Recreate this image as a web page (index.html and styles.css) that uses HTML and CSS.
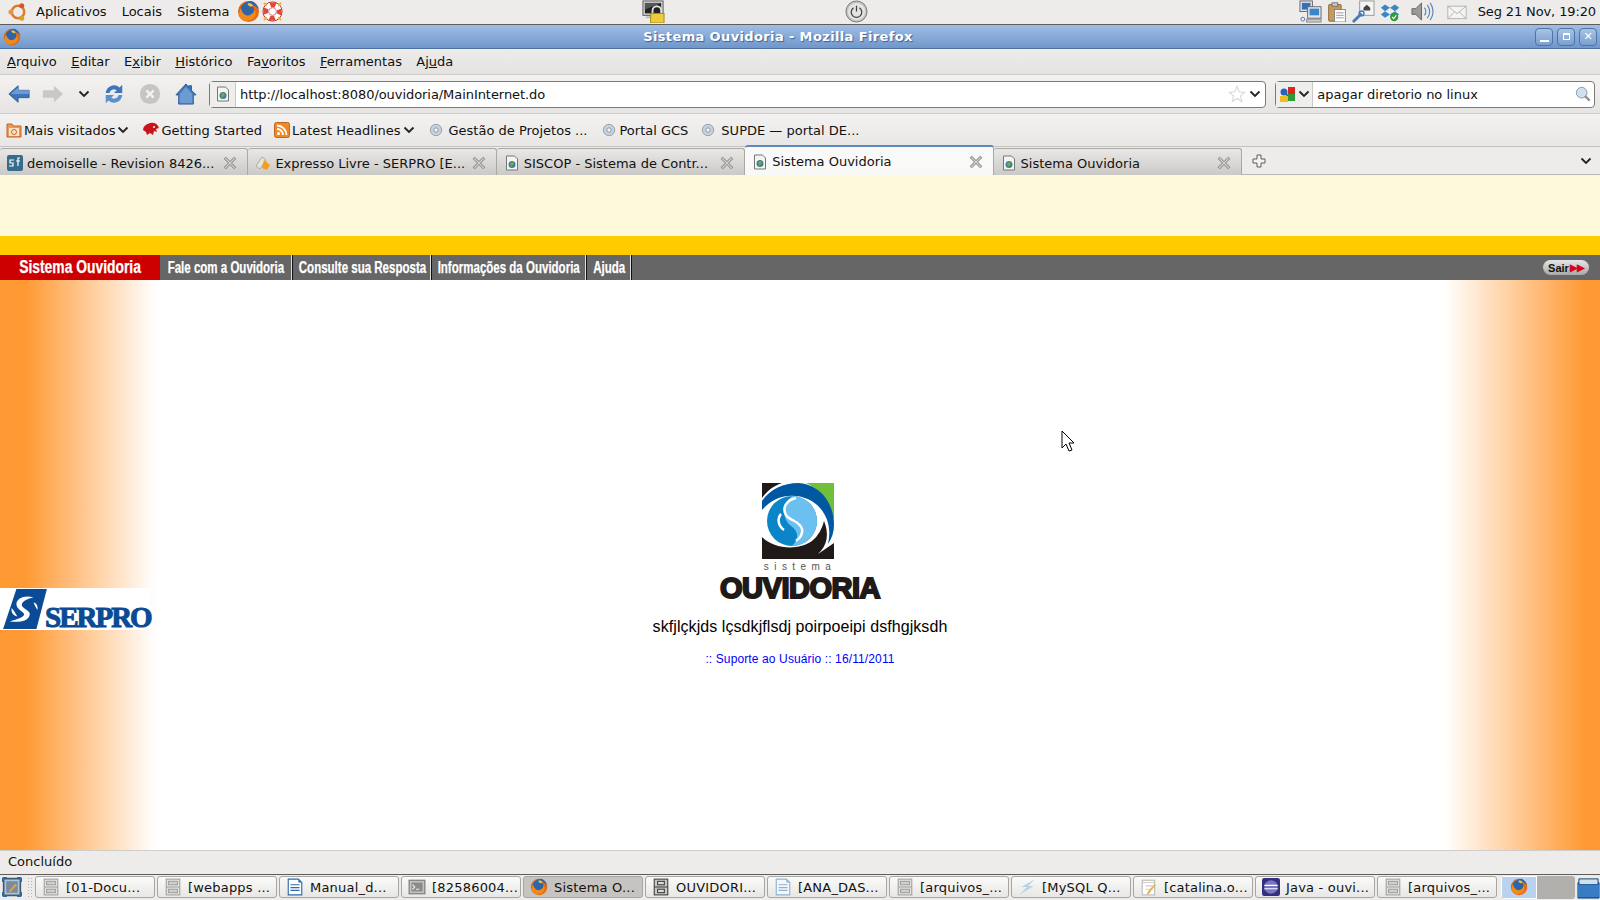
FILE: index.html
```html
<!DOCTYPE html>
<html lang="pt">
<head>
<meta charset="utf-8">
<title>Sistema Ouvidoria - Mozilla Firefox</title>
<link rel="stylesheet" href="styles.css">
</head>
<body>
<svg class="defs" width="0" height="0">
  <symbol id="fox" viewBox="0 0 24 24"><circle cx="12" cy="12" r="11" fill="#e66a12"/><path d="M2 13C3 6 9 1 15 1c4 1 7 5 8 9-2-3-5-5-8-4 2 1 3 3 3 5 0 4-4 7-8 6-3-1-5-3-5-6-1 1-2 2-3 2z" fill="#2f64a8"/><path d="M4 8c1 6 5 9 9 8 3-1 5-3 5-6 2 2 2 6 0 8-3 4-9 5-13 2-3-2-4-7-1-12z" fill="#f08a1d"/><path d="M12 3c2 0 4 1 5 3l-3 1-3-2z" fill="#f5c33b"/></symbol>
  <symbol id="ubuntu" viewBox="0 0 24 24"><circle cx="12" cy="12" r="7.500" fill="none" stroke="#dd7a2c" stroke-width="3"/><circle cx="3.500" cy="12" r="3" fill="#e8934a"/><circle cx="16.500" cy="4.500" r="3" fill="#d9541e"/><circle cx="16.500" cy="19.500" r="3" fill="#d9a21e"/></symbol>
  <symbol id="help" viewBox="0 0 24 24"><circle cx="12" cy="12" r="10" fill="#fff" stroke="#c92a1e" stroke-width="1"/><circle cx="12" cy="12" r="7" fill="none" stroke="#e0483a" stroke-width="5" stroke-dasharray="5.500 5.500" stroke-dashoffset="2.500"/><circle cx="12" cy="12" r="4" fill="#fff" stroke="#b33" stroke-width=".6"/><path d="M3 3l3 3M21 3l-3 3M3 21l3-3M21 21l-3-3" stroke="#d8b93a" stroke-width="2"/></symbol>
  <symbol id="lock" viewBox="0 0 24 24"><rect x="1" y="1" width="21" height="15" fill="#d8d8d8" stroke="#555"/><rect x="3" y="3" width="17" height="11" fill="#222"/><path d="M3 3h17L3 10z" fill="#555"/><rect x="4" y="17" width="8" height="2" fill="#bbb"/><path d="M11 14v-3a4.500 4.500 0 0 1 9 0v3" fill="none" stroke="#ddd" stroke-width="2"/><rect x="9" y="14" width="14" height="10" fill="#eccb3e" stroke="#a78a16"/></symbol>
  <symbol id="power" viewBox="0 0 24 24"><circle cx="12" cy="12" r="11" fill="#c4c4c4" stroke="#777"/><circle cx="12" cy="12" r="9" fill="#e4e4e2"/><path d="M9 8a5.500 5.500 0 1 0 6 0M12 6v6" fill="none" stroke="#444" stroke-width="1.300"/></symbol>
  <symbol id="net" viewBox="0 0 24 24"><rect x="1" y="1" width="13" height="11" fill="#dfe6ee" stroke="#667"/><rect x="3" y="3" width="9" height="7" fill="#3572b0"/><rect x="9" y="7" width="14" height="12" fill="#dfe6ee" stroke="#667"/><rect x="11" y="9" width="10" height="7" fill="#3b86c8"/><rect x="8" y="20" width="15" height="3" fill="#ccc" stroke="#888"/><circle cx="4" cy="20" r="2" fill="none" stroke="#57a"/></symbol>
  <symbol id="clip" viewBox="0 0 24 24"><rect x="2" y="3" width="15" height="20" rx="1" fill="#c79a5a" stroke="#7b5a2a"/><rect x="6" y="1" width="7" height="4" fill="#ccc" stroke="#666"/><rect x="9" y="9" width="13" height="15" fill="#fff" stroke="#777"/><path d="M11 13h9M11 16h9M11 19h9" stroke="#888"/></symbol>
  <symbol id="remote" viewBox="0 0 24 24"><rect x="8" y="1" width="15" height="15" fill="#f4f4f4" stroke="#999"/><path d="M12 8l3.500-3 3.500 3v3h-7z" fill="#444"/><path d="M1 23l9-9" stroke="#4a7ab5" stroke-width="3"/><circle cx="10" cy="14" r="2.500" fill="none" stroke="#4a7ab5" stroke-width="1.500"/></symbol>
  <symbol id="dropbox" viewBox="0 0 24 24"><path d="M6 3l6 4-6 4-5-4zM18 3l-6 4 6 4 5-4zM6 11l6 4-6 4-5-4zM18 11l-6 4 6 4 5-4z" fill="#3b87c4"/><circle cx="17" cy="18" r="5" fill="#2f9a3c"/><path d="M14.500 18l2 2 3-4" fill="none" stroke="#fff" stroke-width="1.500"/></symbol>
  <symbol id="speaker" viewBox="0 0 24 24"><path d="M1 9h4l6-6v18l-6-6H1z" fill="#9a9a98" stroke="#666"/><path d="M14 8q3 4 0 8M17 5q5 7 0 14M20 3q6 9 0 18" fill="none" stroke="#5b86b8" stroke-width="1.200"/></symbol>
  <symbol id="mail" viewBox="0 0 24 24"><rect x="1" y="5" width="22" height="15" fill="#f4f4f2" stroke="#aaa"/><path d="M1 5l11 9 11-9M1 20l8-8M23 20l-8-8" fill="none" stroke="#aaa"/></symbol>
  <symbol id="back" viewBox="0 0 24 24"><path d="M1 12L11 3v5h12v8H11v5z" fill="#3f76b8" stroke="#2c5a96"/><path d="M3 12l8-7v3h12v4z" fill="#6b9bd2"/></symbol>
  <symbol id="forward" viewBox="0 0 24 24"><path d="M23 12L13 3v5H1v8h12v5z" fill="#c8c8c6"/></symbol>
  <symbol id="reload" viewBox="0 0 24 24"><path d="M3 11a9 9 0 0 1 15-6l3-3v9h-9l3-3a5 5 0 0 0-8 3z" fill="#3f76b8"/><path d="M21 13a9 9 0 0 1-15 6l-3 3v-9h9l-3 3a5 5 0 0 0 8-3z" fill="#5c8fca"/></symbol>
  <symbol id="stop" viewBox="0 0 24 24"><circle cx="12" cy="12" r="11" fill="#c7c5c2"/><path d="M8 8l8 8M16 8l-8 8" stroke="#f2f2f0" stroke-width="2.500"/></symbol>
  <symbol id="home" viewBox="0 0 24 24"><path d="M12 1L1 13h3v10h16V13h3l-5-5V3h-3v2z" fill="#3f76b8" stroke="#2c5a96"/><path d="M12 4L5 12v10h14V12z" fill="#6b9bd2"/></symbol>
  <symbol id="page" viewBox="0 0 16 16"><path d="M2.500 1h8l3 3v11h-11z" fill="#f4f4f2" stroke="#777"/><circle cx="8" cy="9.500" r="3.500" fill="#3f7f9a"/><path d="M6 8l3-1 1 2-3 3z" fill="#7aa846"/></symbol>
  <symbol id="dot" viewBox="0 0 16 16"><circle cx="8" cy="8" r="6.500" fill="#c9d2da" stroke="#8c9aa8"/><circle cx="8" cy="8" r="2.500" fill="#f4f4f4" stroke="#7e8f9f"/></symbol>
  <symbol id="close" viewBox="0 0 16 16"><path d="M2 2l12 12M14 2L2 14" stroke="#8c8c8a" stroke-width="3.500"/><path d="M2.500 2.500l11 11M13.500 2.500l-11 11" stroke="#d8d8d6" stroke-width="1.300"/></symbol>
  <symbol id="star" viewBox="0 0 24 24"><path d="M12 2l3 7 7 .8-5.300 4.700L18.300 22 12 18l-6.300 4 1.600-7.500L2 9.800 9 9z" fill="#fff" stroke="#d8d8d8" stroke-width="1.500"/></symbol>
  <symbol id="google" viewBox="0 0 16 16"><path d="M8 1h7v8H8z" fill="#d8281c"/><path d="M6 8h9v7H6z" fill="#2f9a3c"/><path d="M0 10h8v6H0z" fill="#f0bc24"/><circle cx="4" cy="6" r="3.500" fill="#2a62c4"/></symbol>
  <symbol id="search" viewBox="0 0 24 24"><circle cx="10" cy="10" r="8" fill="#cfe0ee" stroke="#8c9aa8" stroke-width="1.500"/><path d="M15 15l7 7" stroke="#8b8f94" stroke-width="3.500"/></symbol>
  <symbol id="folder" viewBox="0 0 16 16"><path d="M1 2h5l1 2h8v11H1z" fill="#e89a56" stroke="#c0632a"/><rect x="3" y="6" width="10" height="8" fill="#fbe3c6"/><circle cx="8" cy="10" r="2.500" fill="none" stroke="#d0632a"/></symbol>
  <symbol id="bug" viewBox="0 0 16 16"><path d="M0 8q0-5 7-7 7-1 9 5l-3 1 1 3-3-1-1 4-3-2-3 2-1-3z" fill="#c8141c"/><circle cx="11" cy="5" r="1" fill="#fff"/></symbol>
  <symbol id="rss" viewBox="0 0 16 16"><rect x=".5" y=".5" width="15" height="15" rx="2" fill="#ee8a24" stroke="#c0632a"/><circle cx="4.500" cy="11.500" r="1.500" fill="#fff"/><path d="M3 7a6 6 0 0 1 6 6M3 3.500A9.500 9.500 0 0 1 12.500 13" fill="none" stroke="#fff" stroke-width="1.800"/></symbol>
  <symbol id="sf" viewBox="0 0 16 16"><rect x="0" y="0" width="16" height="16" rx="2" fill="#356c8c"/><path d="M7 5H3v3h3v3H2M13 3h-2v8M9 6h4" fill="none" stroke="#fff" stroke-width="1.200"/></symbol>
  <symbol id="expresso" viewBox="0 0 16 16"><path d="M1 11L7 2l4 3-6 9z" fill="#e8e4da" stroke="#aaa"/><path d="M9 5l6 5-3 5-5-2z" fill="#f0a020"/></symbol>
  <symbol id="drawer" viewBox="0 0 16 16"><rect x="2" y="1" width="12" height="14" fill="#e6e6e4" stroke="#a2a2a0"/><path d="M2 8h12" stroke="#a2a2a0"/><rect x="4" y="3" width="8" height="3" fill="#d0d0ce" stroke="#a2a2a0"/><rect x="4" y="10" width="8" height="3" fill="#d0d0ce" stroke="#a2a2a0"/></symbol>
  <symbol id="drawerdark" viewBox="0 0 16 16"><rect x="2" y="1" width="12" height="14" fill="#c8c8c6" stroke="#444"/><path d="M2 8h12" stroke="#444"/><rect x="5" y="3" width="6" height="3" fill="#ddd" stroke="#444"/><rect x="5" y="10" width="6" height="3" fill="#ddd" stroke="#444"/></symbol>
  <symbol id="doc" viewBox="0 0 16 16"><path d="M2 1h9l3 3v11H2z" fill="#fff" stroke="#2c6aa8"/><path d="M4 6h8M4 8.500h8M4 11h8" stroke="#2c6aa8"/><path d="M11 1l3 3h-3z" fill="#2c6aa8"/></symbol>
  <symbol id="docpale" viewBox="0 0 16 16"><path d="M2 1h9l3 3v11H2z" fill="#f4f8fc" stroke="#8fb2d2"/><path d="M4 6h8M4 8.500h8M4 11h8" stroke="#8fb2d2"/><path d="M11 1l3 3h-3z" fill="#8fb2d2"/></symbol>
  <symbol id="term" viewBox="0 0 16 16"><rect x="1" y="2" width="14" height="12" fill="#c4c4c2" stroke="#777"/><rect x="3" y="4" width="10" height="8" fill="#8c8c8a"/><path d="M4 6l2 2-2 2M7 10h3" fill="none" stroke="#eee"/></symbol>
  <symbol id="bolt" viewBox="0 0 16 16"><path d="M15 1L3 8h5l-7 7 13-8H9z" fill="#b8d0e4"/></symbol>
  <symbol id="note" viewBox="0 0 16 16"><rect x="2" y="2" width="11" height="13" fill="#fff" stroke="#bbb"/><path d="M2 4h11M5 7h6M5 10h4" stroke="#ccc"/><path d="M14 6l-6 8-2 1 1-3 6-7z" fill="#e8b04a"/></symbol>
  <symbol id="eclipse" viewBox="0 0 16 16"><rect x="0" y="0" width="16" height="16" rx="2" fill="#34307c"/><circle cx="8" cy="8" r="6" fill="#7c74c4"/><path d="M2 6.500h12M2 9.500h12" stroke="#fff"/></symbol>
  <symbol id="desk" viewBox="0 0 24 24"><rect x="2" y="2" width="20" height="20" rx="1" fill="#a9c8de" stroke="#45586c" stroke-width="2"/><rect x="5" y="5" width="14" height="14" fill="#7a8c9c"/><path d="M8 17l8-9 2 2-8 8z" fill="#e8a040"/><path d="M1 1h5M1 1v5M23 1h-5M23 1v5M1 23h5M1 23v-5M23 23h-5M23 23v-5" stroke="#2c6aa8" stroke-width="2"/></symbol>
  <symbol id="trash" viewBox="0 0 24 24"><path d="M1 7h22v16H1z" fill="#2a6ab0" stroke="#14406e"/><path d="M2 3h20v6H2z" fill="#cfe0ee" stroke="#14406e"/><path d="M1 9h22v13H1z" fill="#3a7cc4"/></symbol>
  <symbol id="cursor" viewBox="0 0 14 22"><path d="M1 1v17l4-4 3 7 3-1-3-7h5z" fill="#fff" stroke="#000"/></symbol>
  <symbol id="chev" viewBox="0 0 12 8"><path d="M1.500 1.500L6 6l4.500-4.500" fill="none" stroke="#222" stroke-width="1.800"/></symbol>
  <symbol id="plus" viewBox="0 0 14 14"><path d="M5 1h4v4h4v4H9v4H5V9H1V5h4z" fill="#f2f2f0" stroke="#5c5c5a"/></symbol>
</svg>

<div class="screen">
  <header class="panel">
    <svg class="i20 ubuntu-i"><use href="#ubuntu"/></svg>
    <span class="panel-menu">Aplicativos</span>
    <span class="panel-menu">Locais</span>
    <span class="panel-menu">Sistema</span>
    <svg class="i23"><use href="#fox"/></svg>
    <svg class="i23 help-i"><use href="#help"/></svg>
    <svg class="i23 lock-i"><use href="#lock"/></svg>
    <svg class="i23 power-i"><use href="#power"/></svg>
    <div class="tray">
      <svg class="i23"><use href="#net"/></svg>
      <svg class="i20"><use href="#clip"/></svg>
      <svg class="i23"><use href="#remote"/></svg>
      <svg class="i20"><use href="#dropbox"/></svg>
      <svg class="i23"><use href="#speaker"/></svg>
      <svg class="i20"><use href="#mail"/></svg>
      <span class="clock">Seg 21 Nov, 19:20</span>
    </div>
  </header>

  <div class="titlebar">
    <svg class="i18 title-fox"><use href="#fox"/></svg>
    <span class="title-text">Sistema Ouvidoria - Mozilla Firefox</span>
    <div class="winbtns">
      <span class="winbtn"><span class="w-min"></span></span>
      <span class="winbtn"><span class="w-max"></span></span>
      <span class="winbtn"><span class="w-x">✕</span></span>
    </div>
  </div>

  <nav class="menubar">
    <span><u>A</u>rquivo</span><span><u>E</u>ditar</span><span>E<u>x</u>ibir</span><span><u>H</u>istórico</span><span>Fa<u>v</u>oritos</span><span><u>F</u>erramentas</span><span>Aj<u>u</u>da</span>
  </nav>

  <div class="navbar">
    <svg class="i22 nav-back"><use href="#back"/></svg>
    <svg class="i22 nav-fwd"><use href="#forward"/></svg>
    <svg class="chev nav-chev"><use href="#chev"/></svg>
    <svg class="i22 nav-reload"><use href="#reload"/></svg>
    <svg class="i22 nav-stop"><use href="#stop"/></svg>
    <svg class="i22 nav-home"><use href="#home"/></svg>
    <div class="urlbar">
      <span class="url-fav"><svg class="i16"><use href="#page"/></svg></span>
      <span class="url-text">http://localhost:8080/ouvidoria/MainInternet.do</span>
      <svg class="i18 star-i"><use href="#star"/></svg>
      <svg class="chev"><use href="#chev"/></svg>
    </div>
    <div class="searchbar">
      <span class="search-eng"><svg class="i16"><use href="#google"/></svg><svg class="chev"><use href="#chev"/></svg></span>
      <span class="search-text">apagar diretorio no linux</span>
      <svg class="i16"><use href="#search"/></svg>
    </div>
  </div>

  <div class="bookmarks">
    <span class="bm bm-a"><svg class="i16"><use href="#folder"/></svg>Mais visitados<svg class="chev"><use href="#chev"/></svg></span>
    <span class="bm bm-b"><svg class="i16"><use href="#bug"/></svg>Getting Started</span>
    <span class="bm bm-c"><svg class="i16"><use href="#rss"/></svg>Latest Headlines<svg class="chev"><use href="#chev"/></svg></span>
    <span class="bm bm-d"><svg class="i14"><use href="#dot"/></svg>Gestão de Projetos ...</span>
    <span class="bm bm-e"><svg class="i14"><use href="#dot"/></svg>Portal GCS</span>
    <span class="bm bm-d"><svg class="i14"><use href="#dot"/></svg>SUPDE — portal DE...</span>
  </div>

  <div class="tabbar">
    <div class="tab"><svg class="i16"><use href="#sf"/></svg><span class="tab-t">demoiselle - Revision 8426...</span><svg class="i14"><use href="#close"/></svg></div>
    <div class="tab"><svg class="i16"><use href="#expresso"/></svg><span class="tab-t">Expresso Livre - SERPRO [E...</span><svg class="i14"><use href="#close"/></svg></div>
    <div class="tab"><svg class="i16"><use href="#page"/></svg><span class="tab-t">SISCOP - Sistema de Contr...</span><svg class="i14"><use href="#close"/></svg></div>
    <div class="tab tab-on"><svg class="i16"><use href="#page"/></svg><span class="tab-t">Sistema Ouvidoria</span><svg class="i14"><use href="#close"/></svg></div>
    <div class="tab"><svg class="i16"><use href="#page"/></svg><span class="tab-t">Sistema Ouvidoria</span><svg class="i14"><use href="#close"/></svg></div>
    <svg class="i14 tab-plus"><use href="#plus"/></svg>
    <svg class="chev tab-chev"><use href="#chev"/></svg>
  </div>

  <main class="page">
    <div class="cream"></div>
    <div class="yellow"></div>
    <div class="sysnav">
      <span class="sys-name"><span class="squeeze">Sistema Ouvidoria</span></span>
      <span class="sys-item w1"><span class="squeeze">Fale com a Ouvidoria</span></span>
      <span class="sys-item w2"><span class="squeeze">Consulte sua Resposta</span></span>
      <span class="sys-item w3"><span class="squeeze">Informações da Ouvidoria</span></span>
      <span class="sys-item w4"><span class="squeeze">Ajuda</span></span>
      <span class="sair">Sair<span class="sair-arrows">▶▶</span></span>
    </div>
    <div class="content">
      <div class="serpro">
        <svg class="serpro-mark" viewBox="0 0 46 42"><path d="M14 0h32L35 42H0z" fill="#0b4a94"/><path d="M7 34c8 1 19 1 21-7 1-4-6-6-8-9-2-4 5-8 12-9-8-3-18 0-18 7 0 5 6 7 8 10 1 3-7 6-15 8z" fill="#fff"/><path d="M9 20c-1 5 2 8 6 9-2-3-3-6-6-9zM36 22c1-4-1-7-4-8 1 3 2 5 4 8z" fill="#fff"/></svg>
        <span class="serpro-text">SERPRO</span>
      </div>
      <div class="center">
        <svg class="logo-mark" viewBox="0 0 72 76">
          <rect width="72" height="76" fill="#fff"/>
          <path d="M0 0h20C11 3 5 8 0 15z" fill="#1f1a17"/>
          <path d="M44 0h28v40C70 22 60 7 44 0z" fill="#6fbf3a"/>
          <path d="M0 54c12 12 36 14 50 4 6-5 10-12 12-20 5 12 4 24-6 33l16-11v16H0z" fill="#1f1a17"/>
          <path d="M0 18C8 6 22 0 36 0c22 1 36 20 36 42 0 7-2 13-6 19 3-13 1-26-8-36C46 11 18 6 0 27z" fill="#0058a3"/>
          <circle cx="30" cy="38" r="25" fill="#0a86c8"/>
          <path d="M30 13a25 25 0 0 1 0 50c7-7 7-14-1-20-9-7-9-20 1-30z" fill="#6cc0f0"/>
          <path d="M34 15c-10 2-14 10-10 17 4 6 14 6 16 14 1 5-2 9-6 12M22 47c-6-4-7-12-3-16" fill="none" stroke="#fff" stroke-width="2.500"/>
        </svg>
        <span class="logo-sub">sistema</span>
        <span class="logo-name">OUVIDORIA</span>
        <p class="msg">skfjlçkjds lçsdkjflsdj poirpoeipi dsfhgjksdh</p>
        <p class="support">:: Suporte ao Usuário :: 16/11/2011</p>
      </div>
      <svg class="mouse"><use href="#cursor"/></svg>
    </div>
  </main>

  <div class="status">Concluído</div>

  <footer class="taskbar">
    <svg class="i20 desk-i"><use href="#desk"/></svg>
    <span class="handle"></span>
    <span class="task"><svg class="i18"><use href="#drawer"/></svg><span>[01-Docu...</span></span>
    <span class="task"><svg class="i18"><use href="#drawer"/></svg><span>[webapps ...</span></span>
    <span class="task"><svg class="i18"><use href="#doc"/></svg><span>Manual_d...</span></span>
    <span class="task"><svg class="i18"><use href="#term"/></svg><span>[82586004...</span></span>
    <span class="task task-on"><svg class="i18"><use href="#fox"/></svg><span>Sistema O...</span></span>
    <span class="task"><svg class="i18"><use href="#drawerdark"/></svg><span>OUVIDORI...</span></span>
    <span class="task"><svg class="i18"><use href="#docpale"/></svg><span>[ANA_DAS...</span></span>
    <span class="task"><svg class="i18"><use href="#drawer"/></svg><span>[arquivos_...</span></span>
    <span class="task"><svg class="i18"><use href="#bolt"/></svg><span>[MySQL Q...</span></span>
    <span class="task"><svg class="i18"><use href="#note"/></svg><span>[catalina.o...</span></span>
    <span class="task"><svg class="i18"><use href="#eclipse"/></svg><span>Java - ouvi...</span></span>
    <span class="task"><svg class="i18"><use href="#drawer"/></svg><span>[arquivos_...</span></span>
    <div class="pager"><span class="pager-on"><svg class="i18"><use href="#fox"/></svg></span><span class="pager-off"></span></div>
    <svg class="i23 trash-i"><use href="#trash"/></svg>
  </footer>
</div>
</body>
</html>
```

FILE: styles.css
```css
* { box-sizing: border-box; }
html, body { margin: 0; padding: 0; }
body { width: 1600px; height: 900px; overflow: hidden; font-family: "DejaVu Sans", sans-serif; font-size: 13px; color: #111; background: #edecea; }
.defs { position: absolute; }
svg { display: block; flex: none; }
.i14 { width: 14px; height: 14px; }
.i16 { width: 16px; height: 16px; }
.i18 { width: 18px; height: 18px; }
.i20 { width: 20px; height: 20px; }
.i22 { width: 22px; height: 22px; }
.i23 { width: 23px; height: 23px; }
.chev { width: 12px; height: 8px; }

.screen { display: flex; flex-direction: column; width: 1600px; height: 900px; }

.panel { display: flex; align-items: center; height: 25px; padding-bottom: 1px; background: #edecea; border-bottom: 1px solid #5d5e5c; flex: none; }
.ubuntu-i { margin-left: 8px; margin-right: 8px; }
.panel-menu { margin-right: 15px; }
.panel-menu + svg { margin-left: -7px; }
.help-i { margin-left: 1px; }
.lock-i { margin-left: 358px; }
.power-i { margin-left: 180px; }
.tray { display: flex; align-items: center; gap: 5px; margin-left: auto; }
.tray svg:nth-child(5) { margin-left: 6px; }
.tray svg:nth-child(6) { margin-left: 8px; }
.clock { margin-left: 6px; margin-right: 4px; letter-spacing: -.12px; }

.titlebar { display: flex; align-items: center; height: 24px; flex: none; background: linear-gradient(#a0bde4, #7097cb); border-bottom: 1px solid #4e74a6; }
.title-fox { margin-left: 3px; }
.title-text { flex: 1; text-align: center; color: #fff; font-weight: bold; font-size: 13px; letter-spacing: .37px; text-shadow: 1px 1px 1px #3c5f92; }
.winbtns { display: flex; gap: 4px; margin-right: 3px; }
.winbtn { display: flex; align-items: center; justify-content: center; width: 18px; height: 18px; border: 1px solid #4e74a6; border-radius: 4px; background: linear-gradient(#a8c3e6, #7a9fd0); }
.w-min { width: 9px; height: 2px; margin-top: 8px; background: #fff; }
.w-max { width: 7px; height: 7px; border: 1px solid #fff; border-top-width: 2px; }
.w-x { color: #fff; font-size: 11px; line-height: 1; font-weight: bold; }

.menubar { display: flex; align-items: center; gap: 14.4px; height: 26px; padding: 0 0 1px 7px; flex: none; background: linear-gradient(#edecea, #e4e3e1); border-bottom: 1px solid #cfcdca; }

.navbar { display: flex; align-items: center; height: 39px; padding-right: 5px; flex: none; background: linear-gradient(#f3f2f0, #e6e5e3); border-bottom: 1px solid #cfcdca; }
.nav-back { margin-left: 8px; margin-right: 12px; }
.nav-fwd { margin-right: 12px; }
.nav-chev { margin-left: 2px; margin-right: 13px; }
.nav-reload { margin-right: 14px; }
.nav-stop { margin-right: 14px; }
.nav-home { margin-right: 11px; }
.urlbar { display: flex; align-items: center; width: 1058px; height: 27px; margin-left: 1px; background: #fff; border: 1px solid #7a7a78; border-radius: 4px; }
.url-fav { display: flex; align-items: center; justify-content: center; width: 26px; height: 25px; background: #eeeeec; border-right: 1px solid #c8c8c6; }
.url-text { flex: 1; padding-left: 4px; letter-spacing: -.06px; }
.star-i { margin-right: 3px; }
.urlbar .chev { margin-right: 4px; }
.searchbar { display: flex; align-items: center; width: 320px; height: 27px; margin-left: 9px; padding-right: 3px; background: #fff; border: 1px solid #7a7a78; border-radius: 4px; }
.search-eng { display: flex; align-items: center; gap: 2px; height: 25px; padding: 0 2px 0 4px; background: #eeeeec; border-right: 1px solid #c8c8c6; }
.search-text { flex: 1; padding-left: 4px; }

.bookmarks { display: flex; align-items: center; height: 33px; padding-left: 6px; flex: none; background: linear-gradient(#f3f2f0, #e8e7e5); border-bottom: 1px solid #c4c2bf; }
.bm { display: flex; align-items: center; gap: 2px; margin-right: 12px; }
.bm-a { margin-right: 14px; }
.bm-c { margin-right: 11px; }
.bm-d { gap: 6px; margin-left: 3px; }
.bm-e { gap: 3px; margin-left: 3px; margin-right: 10px; }

.tabbar { display: flex; align-items: center; height: 28px; flex: none; background: #edecea; border-bottom: 1px solid #b9b7b4; }
.tab { display: flex; align-items: center; width: 248.4px; height: 27px; margin-top: 1px; padding: 3px 10px 0 7px; background: linear-gradient(#e9e8e6, #cbc9c6); border: 1px solid #aaa8a5; border-bottom: 0; border-left-width: 0; border-radius: 3px 3px 0 0; }
.tab-t { flex: 1; padding-left: 4px; white-space: nowrap; }
.tab-on { height: 30px; margin-top: -2px; padding-top: 2px; background: #f9f9f7; border-top: 2px solid #5d88bd; }
.tab-plus { margin-left: 10px; }
.tab-chev { margin-left: auto; margin-right: 8px; }

.page { display: flex; flex-direction: column; flex: 1; min-height: 0; background: #fff; }
.cream { height: 61px; flex: none; background: #fff9dc; }
.yellow { height: 19px; flex: none; background: #ffcc00; }
.sysnav { display: flex; align-items: stretch; height: 25px; flex: none; background: #666; color: #fff; font-family: "Liberation Sans", sans-serif; font-weight: bold; font-size: 16px; }
.squeeze { display: inline-block; flex: none; white-space: nowrap; transform: scaleX(.72); -webkit-text-stroke: .25px #fff; }
.sys-name { display: flex; align-items: center; justify-content: center; width: 160px; background: #cc0000; font-size: 18px; }
.sys-name .squeeze { transform: scaleX(.77); }
.sys-item { display: flex; align-items: center; justify-content: center; border-right: 1px solid #111; box-shadow: inset -1px 0 0 #ddd; }
.w1 { width: 133px; }
.w2 { width: 139px; }
.w3 { width: 155px; }
.w4 { width: 45px; }
.sair { display: flex; align-items: center; justify-content: center; margin: 5px 11px 5px auto; width: 46px; border-radius: 8px; background: linear-gradient(#e6e6e6, #a8a8a8); color: #111; font-size: 11px; }
.sair-arrows { color: #d8001c; font-size: 10px; letter-spacing: -1px; margin-left: 1px; }

.content { position: relative; flex: 1; display: flex; flex-direction: column; align-items: center; background: linear-gradient(90deg, #ff9933 0, #ff9933 25px, #ffffff 155px, #ffffff 1445px, #ff9933 1585px, #ff9933 100%); }
.serpro { position: absolute; left: 0; top: 308px; display: flex; align-items: center; width: 150px; height: 42px; padding-left: 2px; background: #fff; }
.serpro-mark { width: 46px; height: 40px; }
.serpro-text { margin-left: -3px; margin-top: 15px; color: #0b4a94; font-family: "Liberation Serif", serif; font-weight: bold; font-size: 29px; line-height: 26px; letter-spacing: -2px; -webkit-text-stroke: 1px #0b4a94; }
.center { display: flex; flex-direction: column; align-items: center; margin-top: 203px; }
.logo-mark { width: 72px; height: 76px; margin-right: 3px; }
.logo-sub { margin-top: 2px; color: #555; font-family: "Liberation Sans", sans-serif; font-size: 10px; line-height: 12px; letter-spacing: 5.4px; }
.logo-name { color: #1f1a17; font-family: "Liberation Sans", sans-serif; font-weight: bold; font-size: 29px; line-height: 30px; letter-spacing: -.5px; -webkit-text-stroke: 2px #1f1a17; }
.msg { margin: 14px 0 0; font-family: "Liberation Sans", sans-serif; font-size: 16px; line-height: 20px; letter-spacing: .07px; color: #000; }
.support { margin: 15px 0 0; font-family: "Liberation Sans", sans-serif; font-size: 12px; line-height: 14px; letter-spacing: .12px; color: #0000ff; }
.mouse { position: absolute; left: 1061px; top: 150px; width: 14px; height: 22px; }

.status { display: flex; align-items: center; height: 25px; padding: 0 0 3px 8px; flex: none; background: #edecea; border-top: 1px solid #cfcdca; border-bottom: 1px solid #5d5e5c; }

.taskbar { display: flex; align-items: center; height: 25px; padding-bottom: 1px; flex: none; background: #edecea; }
.desk-i { margin-left: 2px; }
.handle { width: 6px; height: 20px; margin: 0 2px 0 5px; background-image: radial-gradient(#b5b5b3 1px, transparent 1px); background-size: 3px 3px; }
.task { display: flex; align-items: center; flex: none; width: 120px; height: 22px; margin-right: 2px; padding: 0 4px 0 6px; background: linear-gradient(#fafaf9, #e8e7e5); border: 1px solid #a8a6a3; border-radius: 3px; }
.task span { flex: 1; padding-left: 6px; white-space: nowrap; letter-spacing: .2px; }
.task-on { background: #c6c4c1; }
.pager { display: flex; height: 23px; width: 74px; margin-left: 2px; border-radius: 3px; overflow: hidden; background: #b2b0ad; }
.pager-on { display: flex; align-items: center; justify-content: center; width: 36px; background: #b8d2f0; border: 1px solid #fff; }
.trash-i { margin-left: 2px; }
```
